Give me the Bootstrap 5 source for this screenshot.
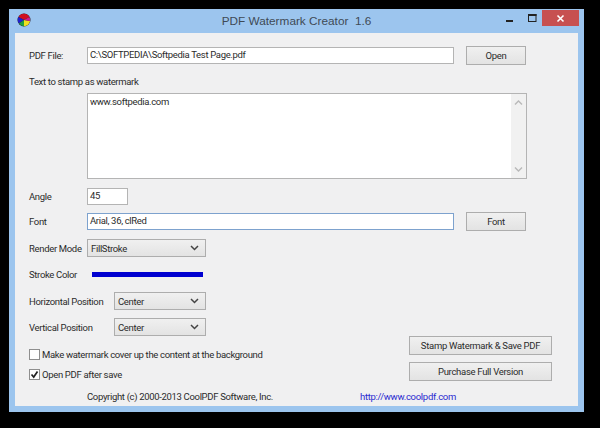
<!DOCTYPE html>
<html><head><meta charset="utf-8">
<link href="https://cdn.jsdelivr.net/npm/bootstrap@5.3.0/dist/css/bootstrap.min.css" rel="stylesheet">
<style>
html,body{height:428px;overflow:hidden}
body{background:#000;font-family:Roboto,"Liberation Sans",Arial,sans-serif;font-size:9.5px;letter-spacing:-.33px;line-height:13px;color:#2b2b2b;padding:9px 16px 16px 9px;white-space:nowrap}
.app-win{width:575px;height:403px;background:#9cc5ee;padding:0 6px 6px}
.app-title{height:24px;position:relative;font-family:"Liberation Sans",Arial,sans-serif;font-size:11.8px;letter-spacing:0;color:#3f4a55;padding-top:1px}
.app-logo{position:absolute;left:2px;top:4px}
.app-ctrl{position:absolute;top:1px;right:-1px;height:16px}
.app-close{width:37px;height:16px;background:#c75050}
.app-client{height:373px;background:#f0f0f1;padding:13px 14px 0 14px}
.lbl{width:58px;flex:none}
.wide{width:85px;flex:none}
.w-field{border:1px solid #b4b4b4;background:#fff;height:17px;padding:0 2px;line-height:14px}
.w-path{width:367px}
.w-focus{border-color:#7da2ce;width:367px}
.w-angle{width:41px}
.w-btn{border:1px solid #adadad;background:linear-gradient(#f0f0f0,#e3e3e3);color:#2b2b2b;display:flex;align-items:center;justify-content:center;padding:0;font-size:9.5px;letter-spacing:-.3px;border-radius:0}
.b-small{width:60px;height:19px;margin-left:12px}
.b-big{width:143px;height:19px}
.w-sel{border:1px solid #adadad;background:linear-gradient(#f0f0f0,#e3e3e3);height:18px;padding:0 6px 0 3px;display:flex;align-items:center;justify-content:space-between}
.s-a{width:119px}.s-b{width:92px}
.lbl-text{margin-top:10px}
.w-area{width:440px;height:86px;border:1px solid #b4b4b4;background:#fff;padding:1px 2px;display:flex;justify-content:space-between;margin:5px 0 9px 58px}
.w-scroll{width:15px;margin:-1px -2px -1px 0;background:#f1f1f1;display:flex;flex-direction:column;justify-content:space-between;align-items:center;padding:6px 0}
.w-stroke{width:111px;height:5px;background:#0000d0;margin-left:5px}
.w-chk{width:11px;height:11px;border:1px solid #8e8e8e;background:#fff;flex:none;margin-right:2px;display:flex}
.w-link{color:#2a2ad0;letter-spacing:-.3px}
.font-row{margin-top:7px}
.render-row{margin-top:8px}
.stroke-row{margin-top:11px}
.h-row{margin-top:11px}
.v-row{margin-top:8px}
.bottom-row{padding-right:12px}
.chks{padding-top:12px}
.chk2{margin-top:7px}
.btn2{margin-top:7px}
.foot{margin-top:9px;padding-left:58px}
.foot-a{width:273px}
</style></head><body>
<div class="app-win">
 <div class="app-title d-flex justify-content-center align-items-center">
  <svg class="app-logo" width="14" height="14" viewBox="0 0 14 14"><circle cx="7" cy="7" r="6.5" fill="#222"/><path d="M7 7L1.5 4A6.2 6.2 0 0 1 12.5 4Z" fill="#d01020"/><path d="M7 7L1.5 4A6.2 6.2 0 0 0 2 10.5Z" fill="#2020d0"/><path d="M7 7L2 10.5A6.2 6.2 0 0 0 7 13.2Z" fill="#20a040"/><path d="M7 7L7 13.2A6.2 6.2 0 0 0 13 8Z" fill="#f0e020"/><path d="M7 7L13 8A6.2 6.2 0 0 0 12.5 4Z" fill="#d02090"/></svg>
  <span>PDF Watermark Creator&nbsp; 1.6</span>
  <div class="app-ctrl d-flex align-items-start">
   <svg width="70" height="16" viewBox="0 0 70 16"><rect x="34" y="10" width="7" height="2" fill="#222"/><rect x="56.5" y="4.5" width="7.5" height="7" fill="none" stroke="#222"/><rect x="56" y="4" width="8.5" height="2" fill="#222"/></svg>
   <div class="app-close d-flex align-items-center justify-content-center"><svg width="9" height="9" viewBox="0 0 9 9"><path d="M1.5 1.5L7.5 7.5M7.5 1.5L1.5 7.5" stroke="#fff" stroke-width="1.6"/></svg></div>
  </div>
 </div>
 <div class="app-client">
  <div class="d-flex align-items-center"><div class="lbl">PDF File:</div><div class="w-field w-path">C:\SOFTPEDIA\Softpedia Test Page.pdf</div><button class="w-btn b-small">Open</button></div>
  <div class="lbl-text">Text to stamp as watermark</div>
  <div class="w-area"><span>www.softpedia.com</span><div class="w-scroll"><svg width="9" height="5" viewBox="0 0 9 5"><path d="M1 4.5L4.5 1L8 4.5" fill="none" stroke="#b8b8b8" stroke-width="1.4"/></svg><svg width="9" height="5" viewBox="0 0 9 5"><path d="M1 .5L4.5 4L8 .5" fill="none" stroke="#b8b8b8" stroke-width="1.4"/></svg></div></div>
  <div class="d-flex align-items-center"><div class="lbl">Angle</div><div class="w-field w-angle">45</div></div>
  <div class="d-flex align-items-center font-row"><div class="lbl">Font</div><div class="w-field w-focus">Arial, 36, clRed</div><button class="w-btn b-small">Font</button></div>
  <div class="d-flex align-items-center render-row"><div class="lbl">Render Mode</div><div class="w-sel s-a"><span>FillStroke</span><svg width="9" height="6" viewBox="0 0 9 6"><path d="M1 1L4.5 4.5L8 1" fill="none" stroke="#444" stroke-width="1.5"/></svg></div></div>
  <div class="d-flex align-items-center stroke-row"><div class="lbl">Stroke Color</div><div class="w-stroke"></div></div>
  <div class="d-flex align-items-center h-row"><div class="wide">Horizontal Position</div><div class="w-sel s-b"><span>Center</span><svg width="9" height="6" viewBox="0 0 9 6"><path d="M1 1L4.5 4.5L8 1" fill="none" stroke="#444" stroke-width="1.5"/></svg></div></div>
  <div class="d-flex align-items-center v-row"><div class="wide">Vertical Position</div><div class="w-sel s-b"><span>Center</span><svg width="9" height="6" viewBox="0 0 9 6"><path d="M1 1L4.5 4.5L8 1" fill="none" stroke="#444" stroke-width="1.5"/></svg></div></div>
  <div class="d-flex justify-content-between bottom-row">
   <div class="chks">
    <div class="d-flex align-items-center"><span class="w-chk"></span>Make watermark cover up the content at the background</div>
    <div class="d-flex align-items-center chk2"><span class="w-chk"><svg width="9" height="9" viewBox="0 0 9 9"><path d="M1.5 4.5L3.7 7L7.5 1.5" fill="none" stroke="#222" stroke-width="1.7"/></svg></span>Open PDF after save</div>
   </div>
   <div class="btns"><button class="w-btn b-big">Stamp Watermark &amp; Save PDF</button><button class="w-btn b-big btn2">Purchase Full Version</button></div>
  </div>
  <div class="d-flex foot"><span class="foot-a">Copyright (c) 2000-2013 CoolPDF Software, Inc.</span><span class="w-link">http://www.coolpdf.com</span></div>
 </div>
</div>
</body></html>
